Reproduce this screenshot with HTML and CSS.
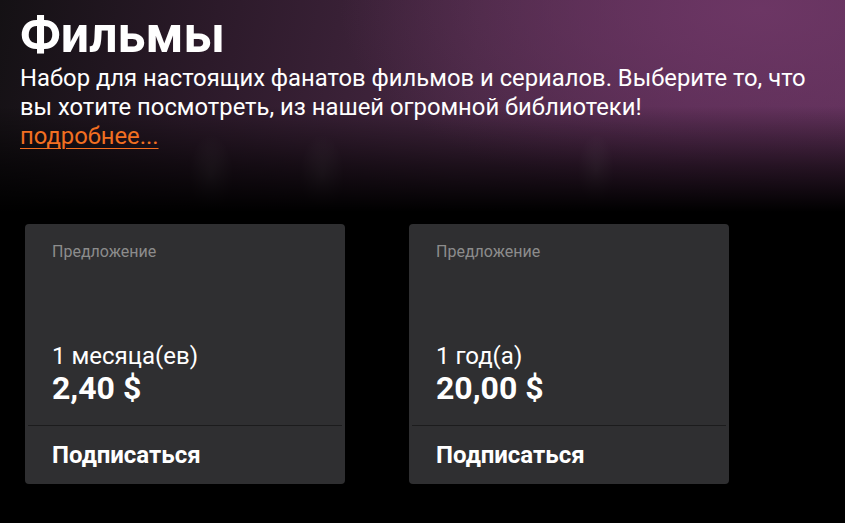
FILE: index.html
```html
<!DOCTYPE html>
<html lang="ru">
<head>
<meta charset="utf-8">
<title>Фильмы</title>
<link rel="stylesheet" href="styles.css">
</head>
<body>
<header class="hero">
  <h1 class="hero-title">Фильмы</h1>
  <p class="hero-text">Набор для настоящих фанатов фильмов и сериалов. Выберите то, что вы хотите посмотреть, из нашей огромной библиотеки!</p>
  <a class="hero-link" href="#">подробнее...</a>
</header>
<section class="offers">
  <article class="card">
    <div class="card-label">Предложение</div>
    <div class="card-body">
      <div class="card-period">1 месяца(ев)</div>
      <div class="card-price">2,40 $</div>
    </div>
    <div class="card-divider"></div>
    <div class="card-action">Подписаться</div>
  </article>
  <article class="card">
    <div class="card-label">Предложение</div>
    <div class="card-body">
      <div class="card-period">1 год(а)</div>
      <div class="card-price">20,00 $</div>
    </div>
    <div class="card-divider"></div>
    <div class="card-action">Подписаться</div>
  </article>
</section>
</body>
</html>
```

FILE: styles.css
```css
html, body {
  margin: 0;
  padding: 0;
  background: #000;
}
body {
  font-family: Roboto, "Noto Sans", sans-serif;
  color: #fff;
  width: 845px;
  height: 523px;
  overflow: hidden;
}
.hero {
  height: 212px;
  box-sizing: border-box;
  padding: 7px 20px 0 20px;
  background:
    linear-gradient(to bottom, rgba(0,0,0,0) 0%, rgba(0,0,0,0) 50%, rgba(0,0,0,0.6) 78%, #000 100%),
    radial-gradient(ellipse 22px 40px at 211px 175px, rgba(255,255,255,0.10), rgba(255,255,255,0) 100%),
    radial-gradient(ellipse 22px 40px at 322px 175px, rgba(255,255,255,0.10), rgba(255,255,255,0) 100%),
    radial-gradient(ellipse 18px 36px at 596px 170px, rgba(255,255,255,0.10), rgba(255,255,255,0) 100%),
    radial-gradient(ellipse 420px 200px at 760px 10px, rgba(110,55,102,0.9), rgba(110,55,102,0) 100%),
    linear-gradient(100deg, #141114 0%, #2c1a2a 25%, #462742 55%, #572c52 80%, #5e3058 100%);
}
.hero-title {
  margin: 0;
  font-size: 50px;
  line-height: 57px;
  font-weight: 700;
}
.hero-text {
  margin: 0;
  font-size: 23.8px;
  line-height: 29px;
  font-weight: 400;
}
.hero-link {
  display: inline-block;
  font-size: 23.8px;
  line-height: 29px;
  color: #f26f21;
  text-decoration: underline;
  text-underline-offset: 4px;
  text-decoration-thickness: 1px;
}
.offers {
  display: flex;
  gap: 64px;
  padding: 12px 25px 0 25px;
}
.card {
  width: 320px;
  height: 260px;
  box-sizing: border-box;
  background: #2f2f31;
  border-radius: 4px;
  display: flex;
  flex-direction: column;
  padding-top: 18px;
}
.card-label {
  padding: 0 27px;
  font-size: 16px;
  line-height: 20px;
  color: #8c8c8c;
}
.card-body {
  flex: 1;
  display: flex;
  flex-direction: column;
  justify-content: flex-end;
  padding: 0 27px 20px 27px;
}
.card-period {
  font-size: 24px;
  line-height: 30px;
}
.card-price {
  font-size: 32px;
  line-height: 34px;
  font-weight: 700;
}
.card-divider {
  height: 1px;
  margin: 0 3px;
  background: #1c1c1d;
}
.card-action {
  padding: 16px 27px;
  font-size: 24px;
  line-height: 26px;
  font-weight: 700;
}
```
